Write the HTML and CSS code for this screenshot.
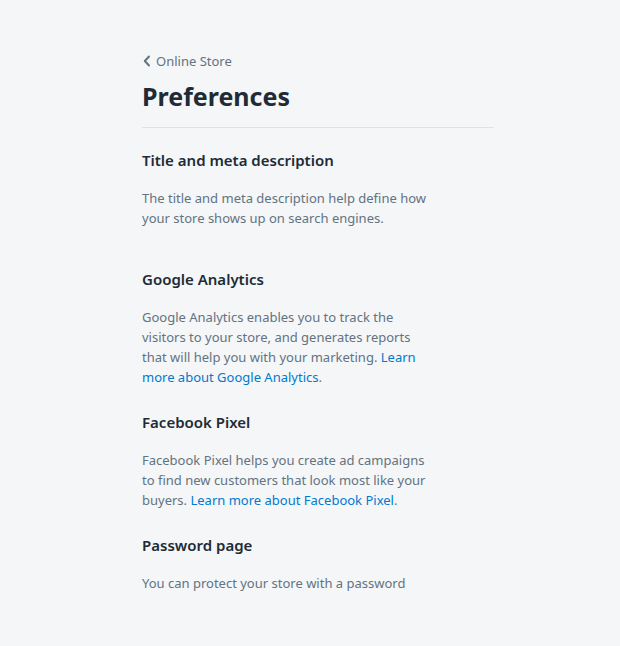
FILE: index.html
```html
<!DOCTYPE html>
<html lang="en">
<head>
<meta charset="utf-8">
<title>Preferences</title>
<link rel="stylesheet" href="styles.css">
</head>
<body>
<main class="page">
  <header class="page-header">
    <a class="back" href="#">
      <svg class="back-icon" width="10" height="12" viewBox="0 0 10 12" aria-hidden="true"><path d="M7 1.5 L2.8 6 L7 10.5" fill="none" stroke="#637381" stroke-width="2" stroke-linecap="round" stroke-linejoin="round"/></svg>
      <span>Online Store</span>
    </a>
    <h1 class="title">Preferences</h1>
  </header>
  <section class="section section-first">
    <h2 class="section-title">Title and meta description</h2>
    <p class="section-text">The title and meta description help define how your store shows up on search engines.</p>
  </section>
  <section class="section">
    <h2 class="section-title">Google Analytics</h2>
    <p class="section-text">Google Analytics enables you to track the visitors to your store, and generates reports that will help you with your marketing. <a class="link" href="#">Learn more about Google Analytics</a>.</p>
  </section>
  <section class="section">
    <h2 class="section-title">Facebook Pixel</h2>
    <p class="section-text">Facebook Pixel helps you create ad campaigns to find new customers that look most like your buyers. <a class="link" href="#">Learn more about Facebook Pixel</a>.</p>
  </section>
  <section class="section">
    <h2 class="section-title">Password page</h2>
    <p class="section-text">You can protect your store with a password</p>
  </section>
</main>
</body>
</html>
```
FILE: styles.css
```css
html, body {
  margin: 0;
  padding: 0;
  background: #f4f6f8;
}
body {
  font-family: "Noto Sans", "Open Sans", sans-serif;
  color: #212b36;
  -webkit-font-smoothing: antialiased;
}
.page {
  width: 352px;
  padding: 51px 0 40px 142px;
}
.page-header {
  border-bottom: 1px solid #dfe3e8;
  padding-bottom: 15px;
}
.back {
  display: flex;
  align-items: center;
  gap: 4px;
  color: #637381;
  text-decoration: none;
  font-size: 13px;
  line-height: 20px;
}
.back-icon {
  display: block;
}
.title {
  margin: 9px 0 0;
  font-size: 25px;
  line-height: 32px;
  font-weight: 700;
  color: #212b36;
}
.section {
  width: 290px;
  padding-top: 23px;
}
.section-first {
  padding-top: 20px;
  padding-bottom: 16px;
}
.section-title {
  margin: 0;
  font-size: 15px;
  line-height: 24px;
  font-weight: 600;
  color: #212b36;
}
.section-text {
  margin: 16px 0 0;
  font-size: 13px;
  line-height: 20px;
  color: #637381;
}
.link {
  color: #007ace;
  text-decoration: none;
}
```
